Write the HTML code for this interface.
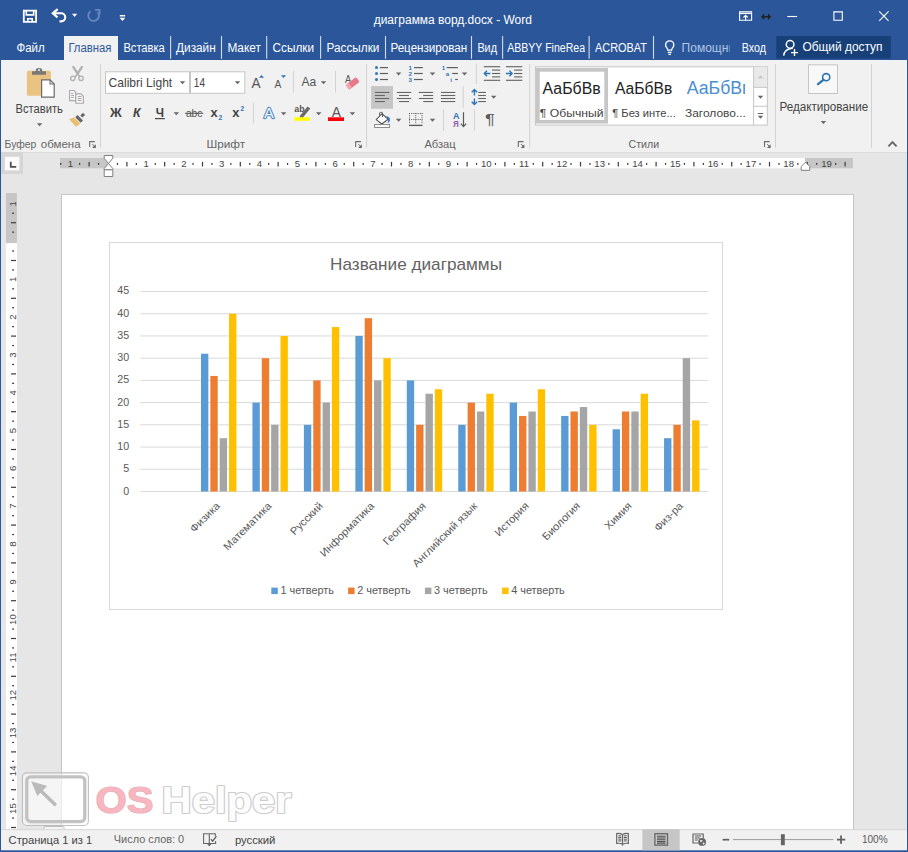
<!DOCTYPE html>
<html lang="ru"><head><meta charset="utf-8"><title>диаграмма ворд.docx - Word</title>
<style>
html,body{margin:0;padding:0}
body{width:908px;height:852px;overflow:hidden;background:#2b579a;position:relative;font-family:"Liberation Sans",sans-serif}
header,nav,section,main,footer,div.r{position:absolute;overflow:hidden;display:block}
svg{display:block;position:absolute;left:0;top:0}
svg text{font-family:"Liberation Sans",sans-serif;white-space:pre}
</style></head><body>
<header class="titlebar" style="left:0px;top:0px;width:908px;height:36px;background:#2b579a"><svg width="908" height="36" viewBox="0 0 908 36"><g fill="none" stroke="#fff" stroke-width="1.8"><path d="M23.800 10.600h12.300v11.200h-12.300z"/><path d="M26.300 10.600v4.300h7.400v-4.300" stroke-width="1.600"/><path d="M27.800 21.800v-3h4.400v3" stroke-width="1.600"/></g><g fill="none" stroke="#fff" stroke-width="2.100"><path d="M53.200 13.300h8a4.050 4.050 0 0 1 0 8.100h-1.700"/><path d="M57.700 9.200l-4.900 4.100 4.700 4" stroke-width="2.200"/></g><path d="M72 13.700h5.200l-2.600 3.200z" fill="#fff"/><g fill="none" stroke="#6786bc" stroke-width="1.900"><path d="M97.660 12.190A5.300 5.300 0 1 1 90.560 11.260"/><path d="M94.900 9.900h4.700v4.700" stroke-width="1.800"/></g><path d="M119.800 15h5.300v1.400h-5.300zM119.600 17.800h5.700l-2.850 3.200z" fill="#fff"/><text x="373.70" y="23.80" font-size="12" fill="#fff" textLength="158.12" lengthAdjust="spacingAndGlyphs">диаграмма ворд.docx - Word</text><g fill="none" stroke="#fff" stroke-width="1.1"><path d="M739.6 11.9h12v8.4h-12z"/><path d="M739.600 13.500h12"/><path d="M745.600 20.300v-4.800M743.500 17.500l2.100-2.100 2.100 2.100"/></g><path d="M761 16.7l3.3-3.3v2.5h3.6v-2.5l3.3 3.3-3.3 3.3v-2.5h-3.6v2.5z" fill="#222"/><path d="M787.3 16.5h9.8" stroke="#fff" stroke-width="1.1"/><path d="M833.9 11.9h8.4v8.4h-8.4z" stroke="#fff" stroke-width="1.1" fill="none"/><path d="M879.2 11.4l9.4 9.4M888.6 11.4l-9.4 9.4" stroke="#fff" stroke-width="1.1" fill="none"/></svg></header>
<nav class="tabs" style="left:0px;top:36px;width:908px;height:24px;background:#2b579a"><svg width="908" height="24" viewBox="0 36 908 24"><rect x="64" y="36" width="54" height="24" fill="#f1f1f1"/><text x="16.50" y="51.60" font-size="12" fill="#fff" textLength="28.20" lengthAdjust="spacingAndGlyphs">Файл</text><text x="68.40" y="51.60" font-size="12" fill="#2b579a" textLength="42.98" lengthAdjust="spacingAndGlyphs">Главная</text><text x="123.40" y="51.60" font-size="12" fill="#fff" textLength="41.40" lengthAdjust="spacingAndGlyphs">Вставка</text><text x="176.10" y="51.60" font-size="12" fill="#fff" textLength="39.63" lengthAdjust="spacingAndGlyphs">Дизайн</text><text x="227.40" y="51.60" font-size="12" fill="#fff" textLength="33.46" lengthAdjust="spacingAndGlyphs">Макет</text><text x="272.60" y="51.60" font-size="12" fill="#fff" textLength="41.44" lengthAdjust="spacingAndGlyphs">Ссылки</text><text x="326.50" y="51.60" font-size="12" fill="#fff" textLength="52.86" lengthAdjust="spacingAndGlyphs">Рассылки</text><text x="390.40" y="51.60" font-size="12" fill="#fff" textLength="76.88" lengthAdjust="spacingAndGlyphs">Рецензирован</text><text x="477.40" y="51.60" font-size="12" fill="#fff" textLength="19.61" lengthAdjust="spacingAndGlyphs">Вид</text><text x="595.00" y="51.60" font-size="12" fill="#fff" textLength="52.02" lengthAdjust="spacingAndGlyphs">ACROBAT</text><text x="741.70" y="51.60" font-size="12" fill="#fff" textLength="24.24" lengthAdjust="spacingAndGlyphs">Вход</text><clipPath id="cpa"><rect x="500" y="36" width="85" height="24"/></clipPath><g clip-path="url(#cpa)"><text x="507.20" y="51.60" font-size="12" fill="#fff" textLength="83.77" lengthAdjust="spacingAndGlyphs">ABBYY FineRead</text></g><clipPath id="cpb"><rect x="675" y="36" width="54.5" height="24"/></clipPath><g clip-path="url(#cpb)"><text x="681.60" y="51.60" font-size="12" fill="#b3c5e3" textLength="53.42" lengthAdjust="spacingAndGlyphs">Помощни</text></g><rect x="170.05" y="36" width="1.100" height="22.800" fill="#d3dcec"/><rect x="220.95" y="36" width="1.100" height="22.800" fill="#d3dcec"/><rect x="266.15" y="36" width="1.100" height="22.800" fill="#d3dcec"/><rect x="320.05" y="36" width="1.100" height="22.800" fill="#d3dcec"/><rect x="384.95" y="36" width="1.100" height="22.800" fill="#d3dcec"/><rect x="470.95" y="36" width="1.100" height="22.800" fill="#d3dcec"/><rect x="502.05" y="36" width="1.100" height="22.800" fill="#d3dcec"/><rect x="588.55" y="36" width="1.100" height="22.800" fill="#d3dcec"/><rect x="652.95" y="36" width="1.100" height="22.800" fill="#d3dcec"/><g transform="translate(0.800 0)" fill="none" stroke="#fff" stroke-width="1.300"><path d="M667 50.200c0-2-2.200-2.600-2.200-5.300a4.100 4.100 0 0 1 8.200 0c0 2.700-2.200 3.300-2.200 5.300z"/><path d="M667 52.300h3.800M667.600 54.300h2.600"/></g><rect x="776.300" y="36" width="114.500" height="22.600" fill="#174079"/><g fill="none" stroke="#fff" stroke-width="1.500"><circle cx="790.100" cy="44.400" r="3.800"/><path d="M783.700 55.700c0.400-3.700 2.700-6.300 6.600-6.900c1-0.100 1.800-0.300 2.500-0.800"/><path d="M794.500 49.100v7M791 52.600h7" stroke-width="1.400"/></g><text x="802.40" y="51.40" font-size="12" fill="#fff" textLength="80.13" lengthAdjust="spacingAndGlyphs">Общий доступ</text></svg></nav>
<section class="ribbon" style="left:1px;top:60px;width:905.5px;height:92px;background:#f1f1f1"><svg width="905.5" height="92" viewBox="1 60 905.5 92"><rect x="26.9" y="70.7" width="24" height="25.1" rx="1.6" fill="#eac282"/><path d="M32 71.3h3.800v-1.200a3.200 2.200 0 0 1 6.400 0v1.200h3.800v3.400h-14z" fill="#787878"/><rect x="38" y="69.300" width="2" height="1.500" fill="#f1f1f1"/><path d="M41.600 79.800h8.400l4.200 4.200v13.200h-12.600z" fill="#fff" stroke="#6a6a6a" stroke-width="1.200"/><path d="M50 79.800v4.200h4.200" fill="none" stroke="#6a6a6a" stroke-width="1.100"/><text x="15.50" y="112.60" font-size="12.3" fill="#444" textLength="47.33" lengthAdjust="spacingAndGlyphs">Вставить</text><path d="M36.85 123.20h5.5l-2.75 3z" fill="#666"/><path d="M71.700 66.600l2.300-0.600 3.600 5.600 3.600-5.600 2.300 0.600-4.700 7.300 1.900 2.700-1.300 0.800-1.800-2.400-1.800 2.400-1.300-0.800 1.900-2.700z" fill="#b0b0b0"/><g fill="none" stroke="#b0b0b0" stroke-width="1.300"><circle cx="72.800" cy="78.300" r="2.200"/><circle cx="81" cy="78.300" r="2.200"/></g><g fill="#f7f3f7" stroke="#ababab" stroke-width="1.100"><path d="M69.600 90.500h4.300l1.800 1.800v8.300h-6.100z"/><path d="M75.800 93.900h5.200l2.400 2.400v7h-7.600z"/></g><g stroke="#ababab" stroke-width="1" fill="none"><path d="M71.200 93.500h2.200M71.200 95.500h2.800M71.200 97.500h2.800M77.800 96.500h3.800M77.800 98.500h3.800M77.800 100.500h3.800"/></g><path d="M69.100 119.300l4.800-1.900 6.400 6-4.200 3.400z" fill="#eabd6e"/><rect x="-3.900" y="-1.650" width="7.800" height="3.300" transform="translate(79.100 118.900) rotate(45)" fill="#666"/><rect x="-1.500" y="-1.900" width="3" height="3.800" transform="translate(82.700 115.200) rotate(45)" fill="#666"/><text x="4.60" y="148.00" font-size="11.3" fill="#666" textLength="31.76" lengthAdjust="spacingAndGlyphs">Буфер</text><text x="40.80" y="148.00" font-size="11.3" fill="#666" textLength="39.79" lengthAdjust="spacingAndGlyphs">обмена</text><path d="M89.70 147.00V141.60H94.90" fill="none" stroke="#6e6e6e" stroke-width="1.100"/><path d="M95.80 144.30V147.90H92.10z" fill="#666"/><path d="M92.40 144.10l2.200 2.200" stroke="#666" stroke-width="1" fill="none"/><rect x="99.90" y="64" width="1" height="83.70" fill="#d2d2d2"/><rect x="105.500" y="71.800" width="139.300" height="21.500" fill="#fff" stroke="#c6c6c6" stroke-width="1"/><path d="M190 71.800v21.500" stroke="#c0c0c0" stroke-width="1.800"/><text x="108.60" y="86.80" font-size="13" fill="#444" textLength="63.64" lengthAdjust="spacingAndGlyphs">Calibri Light</text><text x="193.80" y="86.80" font-size="13" fill="#444" textLength="11.17" lengthAdjust="spacingAndGlyphs">14</text><path d="M179.75 81.20h5.5l-2.75 3z" fill="#666"/><path d="M234.75 81.20h5.5l-2.75 3z" fill="#666"/><text x="110.11" y="116.50" font-size="12" fill="#444" textLength="11.72" lengthAdjust="spacingAndGlyphs" font-weight="bold">Ж</text><text x="133.00" y="116.50" font-size="12" fill="#444" textLength="7.56" lengthAdjust="spacingAndGlyphs" font-weight="bold" font-style="italic">К</text><text x="155.80" y="116.50" font-size="12" fill="#444" textLength="8.23" lengthAdjust="spacingAndGlyphs" font-weight="bold">Ч</text><path d="M155.00 118.60H164.80" stroke="#444" stroke-width="1.2" fill="none"/><path d="M173.55 112.20h5.5l-2.75 3z" fill="#666"/><text x="185.90" y="116.50" font-size="11" fill="#555" textLength="16.53" lengthAdjust="spacingAndGlyphs">abc</text><path d="M185.00 113.30H203.20" stroke="#555" stroke-width="1" fill="none"/><text x="210.40" y="116.50" font-size="12" fill="#444" textLength="7.17" lengthAdjust="spacingAndGlyphs" font-weight="bold">x</text><text x="218.60" y="119.80" font-size="6.5" fill="#2e75b6" textLength="3.72" lengthAdjust="spacingAndGlyphs" font-weight="bold">2</text><text x="232.20" y="116.50" font-size="12" fill="#444" textLength="7.17" lengthAdjust="spacingAndGlyphs" font-weight="bold">x</text><text x="240.60" y="111.30" font-size="6.5" fill="#2e75b6" textLength="3.62" lengthAdjust="spacingAndGlyphs" font-weight="bold">2</text><text x="251.60" y="88.00" font-size="14.4" fill="#555" textLength="9.10" lengthAdjust="spacingAndGlyphs">A</text><path d="M259 77.700h5l-2.500-2.700z" fill="#2e75b6"/><text x="274.40" y="88.00" font-size="11" fill="#555" textLength="6.84" lengthAdjust="spacingAndGlyphs">A</text><path d="M281 75.300h5l-2.500 2.700z" fill="#2e75b6"/><rect x="292.90" y="71" width="1" height="21.50" fill="#d2d2d2"/><text x="301.50" y="86.00" font-size="12.3" fill="#555" textLength="14.75" lengthAdjust="spacingAndGlyphs">Aa</text><path d="M320.75 81.20h5.5l-2.75 3z" fill="#666"/><rect x="335.00" y="71" width="1" height="21.50" fill="#d2d2d2"/><text x="345.00" y="82.60" font-size="10.5" fill="#555" textLength="6.20" lengthAdjust="spacingAndGlyphs">A</text><g transform="rotate(-37 352.600 83.400)"><rect x="346" y="80.400" width="13.200" height="6" rx="1.400" fill="#e8798b"/><rect x="346" y="80.400" width="3.600" height="6" rx="1.300" fill="#f2a9b4"/></g><rect x="253.00" y="102.5" width="1" height="21.00" fill="#d2d2d2"/><text x="264" y="117.600" font-size="14.600" fill="#fff" stroke="#8db4e3" stroke-width="3" stroke-opacity="0.400" stroke-linejoin="round">A</text><text x="264" y="117.600" font-size="14.600" fill="#fff" stroke="#2e75b6" stroke-width="1.700" paint-order="stroke" stroke-linejoin="round">A</text><path d="M280.85 112.20h5.5l-2.75 3z" fill="#666"/><text x="294.30" y="112.30" font-size="9.6" fill="#555" textLength="10.30" lengthAdjust="spacingAndGlyphs" font-weight="bold">ab</text><path d="M299.900 115.800l7.700-9.400 2.700 2.200-7.700 9.400z" fill="#6a6a6a"/><path d="M299.300 117.300l1-1.300 1.800 1.500-1.400 0.600z" fill="#666"/><rect x="294.200" y="117.300" width="15.800" height="3.500" fill="#ffff00"/><path d="M315.95 112.20h5.5l-2.75 3z" fill="#666"/><text x="331.80" y="117.00" font-size="13.8" fill="#555" textLength="9.20" lengthAdjust="spacingAndGlyphs">A</text><rect x="328" y="117.300" width="16" height="3.700" fill="#fb0007"/><path d="M349.65 112.20h5.5l-2.75 3z" fill="#666"/><text x="206.50" y="147.80" font-size="11.3" fill="#666" textLength="38.58" lengthAdjust="spacingAndGlyphs">Шрифт</text><path d="M355.70 147.00V141.60H360.90" fill="none" stroke="#6e6e6e" stroke-width="1.100"/><path d="M361.80 144.30V147.90H358.10z" fill="#666"/><path d="M358.40 144.10l2.200 2.200" stroke="#666" stroke-width="1" fill="none"/><rect x="366.10" y="64" width="1" height="83.70" fill="#d2d2d2"/><circle cx="376.5" cy="67.6" r="1.500" fill="#2e75b6"/><path d="M379.90 67.60H388.00" stroke="#5e5e5e" stroke-width="1.2" fill="none"/><circle cx="376.5" cy="73.5" r="1.500" fill="#2e75b6"/><path d="M379.90 73.50H388.00" stroke="#5e5e5e" stroke-width="1.2" fill="none"/><circle cx="376.5" cy="79.5" r="1.500" fill="#2e75b6"/><path d="M379.90 79.50H388.00" stroke="#5e5e5e" stroke-width="1.2" fill="none"/><path d="M395.85 72.50h5.5l-2.75 3z" fill="#666"/><text x="408.60" y="69.90" font-size="6.200" font-weight="bold" fill="#2e75b6">1</text><path d="M414.00 67.60H422.80" stroke="#5e5e5e" stroke-width="1.2" fill="none"/><text x="408.60" y="75.80" font-size="6.200" font-weight="bold" fill="#2e75b6">2</text><path d="M414.00 73.50H422.80" stroke="#5e5e5e" stroke-width="1.2" fill="none"/><text x="408.60" y="81.80" font-size="6.200" font-weight="bold" fill="#2e75b6">3</text><path d="M414.00 79.50H422.80" stroke="#5e5e5e" stroke-width="1.2" fill="none"/><path d="M429.75 72.50h5.5l-2.75 3z" fill="#666"/><text x="441.70" y="69.90" font-size="6.200" font-weight="bold" fill="#2e75b6">1</text><path d="M446.70 67.60H457.90" stroke="#5e5e5e" stroke-width="1.2" fill="none"/><text x="445.70" y="75.80" font-size="6.200" font-weight="bold" fill="#2e75b6">a</text><path d="M452.20 73.50H457.90" stroke="#5e5e5e" stroke-width="1.2" fill="none"/><text x="450.20" y="81.80" font-size="6.200" font-weight="bold" fill="#2e75b6">i</text><path d="M455.20 79.50H457.90" stroke="#5e5e5e" stroke-width="1.2" fill="none"/><path d="M461.75 72.50h5.5l-2.75 3z" fill="#666"/><rect x="475.80" y="63.5" width="1" height="20.50" fill="#d2d2d2"/><path d="M483.80 66.70H500.20" stroke="#606060" stroke-width="1.1" fill="none"/><path d="M483.80 80.30H500.20" stroke="#606060" stroke-width="1.1" fill="none"/><path d="M492.00 70.10H500.20" stroke="#606060" stroke-width="1.1" fill="none"/><path d="M492.00 73.50H500.20" stroke="#606060" stroke-width="1.1" fill="none"/><path d="M492.00 76.90H500.20" stroke="#606060" stroke-width="1.1" fill="none"/><path d="M484.3 73.500h6M487.0 70.800l-2.700 2.700 2.700 2.700" fill="none" stroke="#2e75b6" stroke-width="1.400"/><path d="M505.90 66.70H522.30" stroke="#606060" stroke-width="1.1" fill="none"/><path d="M505.90 80.30H522.30" stroke="#606060" stroke-width="1.1" fill="none"/><path d="M514.10 70.10H522.30" stroke="#606060" stroke-width="1.1" fill="none"/><path d="M514.10 73.50H522.30" stroke="#606060" stroke-width="1.1" fill="none"/><path d="M514.10 76.90H522.30" stroke="#606060" stroke-width="1.1" fill="none"/><path d="M505.9 73.500h6M509.4 70.800l2.700 2.700-2.700 2.700" fill="none" stroke="#2e75b6" stroke-width="1.400"/><rect x="371.100" y="86" width="21.900" height="22.800" fill="#c6c6c6"/><path d="M374.90 92.45H389.30" stroke="#666" stroke-width="1.1" fill="none"/><path d="M374.90 95.50H384.90" stroke="#666" stroke-width="1.1" fill="none"/><path d="M374.90 98.50H389.30" stroke="#666" stroke-width="1.1" fill="none"/><path d="M374.90 101.55H384.90" stroke="#666" stroke-width="1.1" fill="none"/><path d="M396.80 92.45H411.20" stroke="#666" stroke-width="1.1" fill="none"/><path d="M399.00 95.50H409.00" stroke="#666" stroke-width="1.1" fill="none"/><path d="M396.80 98.50H411.20" stroke="#666" stroke-width="1.1" fill="none"/><path d="M399.00 101.55H409.00" stroke="#666" stroke-width="1.1" fill="none"/><path d="M418.80 92.45H433.20" stroke="#666" stroke-width="1.1" fill="none"/><path d="M423.20 95.50H433.20" stroke="#666" stroke-width="1.1" fill="none"/><path d="M418.80 98.50H433.20" stroke="#666" stroke-width="1.1" fill="none"/><path d="M423.20 101.55H433.20" stroke="#666" stroke-width="1.1" fill="none"/><path d="M440.90 92.45H455.30" stroke="#666" stroke-width="1.1" fill="none"/><path d="M440.90 95.50H455.30" stroke="#666" stroke-width="1.1" fill="none"/><path d="M440.90 98.50H455.30" stroke="#666" stroke-width="1.1" fill="none"/><path d="M440.90 101.55H455.30" stroke="#666" stroke-width="1.1" fill="none"/><rect x="462.70" y="86" width="1" height="21.90" fill="#d2d2d2"/><path d="M474.400 89.600v6M474.400 98.400v6M471.700 92.200l2.700-2.800 2.700 2.800M471.700 101.800l2.700 2.800 2.700-2.800" fill="none" stroke="#2e75b6" stroke-width="1.400"/><path d="M478.20 92.45H485.90" stroke="#666" stroke-width="1.1" fill="none"/><path d="M478.20 95.50H485.90" stroke="#666" stroke-width="1.1" fill="none"/><path d="M478.20 98.50H485.90" stroke="#666" stroke-width="1.1" fill="none"/><path d="M478.20 101.55H485.90" stroke="#666" stroke-width="1.1" fill="none"/><path d="M490.95 95.80h5.5l-2.75 3z" fill="#666"/><path d="M376.200 119.600l5.900-6 6 5.700-6.300 4.700z" fill="#fff" stroke="#555" stroke-width="1.100" stroke-linejoin="round"/><path d="M379.600 115.600v-2.400a0.800 0.800 0 0 1 0.800-0.800h1.300a0.800 0.800 0 0 1 0.800 0.800v3.800" fill="none" stroke="#555" stroke-width="1"/><path d="M386 116c2.600 0.400 4.200 1.800 4 4.200c-0.300 1.300-1.200 2.400-2.400 3.100c0.500-1.500 0.600-2.800 0.400-4.100z" fill="#3a75c4"/><rect x="374.600" y="124.500" width="15" height="3" fill="#fff" stroke="#808080" stroke-width="0.900"/><path d="M395.85 118.80h5.5l-2.75 3z" fill="#666"/><g stroke="#555" stroke-width="1" stroke-dasharray="1 1.170" fill="none"><path d="M409 113.500h13.500M409 119.500h13.500M409.500 113v11M415.700 113v11M422 113v11"/></g><path d="M409.00 125.40H422.50" stroke="#555" stroke-width="1.3" fill="none"/><path d="M429.75 118.80h5.5l-2.75 3z" fill="#666"/><rect x="443.10" y="109.2" width="1" height="21.80" fill="#d2d2d2"/><text x="452.90" y="118.60" font-size="9" fill="#2e75b6" textLength="6.50" lengthAdjust="spacingAndGlyphs" font-weight="bold">A</text><text x="452.90" y="126.80" font-size="8.7" fill="#8e5bb3" textLength="5.76" lengthAdjust="spacingAndGlyphs" font-weight="bold">Я</text><path d="M463.500 112.200v14M460.800 123.700l2.700 2.900 2.700-2.900" fill="none" stroke="#5a5a5a" stroke-width="1.200"/><rect x="474.00" y="109.2" width="1" height="21.80" fill="#d2d2d2"/><text x="484.90" y="124.20" font-size="15" fill="#5a5a5a" textLength="9.85" lengthAdjust="spacingAndGlyphs">¶</text><text x="424.40" y="147.80" font-size="11.3" fill="#666" textLength="31.30" lengthAdjust="spacingAndGlyphs">Абзац</text><path d="M518.30 147.00V141.60H523.50" fill="none" stroke="#6e6e6e" stroke-width="1.100"/><path d="M524.40 144.30V147.90H520.70z" fill="#666"/><path d="M521.00 144.10l2.200 2.200" stroke="#666" stroke-width="1" fill="none"/><rect x="529.20" y="64" width="1" height="83.70" fill="#d2d2d2"/><rect x="535.400" y="66.800" width="231.900" height="58.300" fill="#fff" stroke="#c6c6c6" stroke-width="1"/><rect x="537.850" y="69.850" width="68.300" height="51.900" fill="none" stroke="#c6c6c6" stroke-width="3.700"/><text x="542.60" y="93.80" font-size="16" fill="#222" textLength="58.09" lengthAdjust="spacingAndGlyphs">АаБбВв</text><text x="615.00" y="93.80" font-size="16" fill="#222" textLength="57.29" lengthAdjust="spacingAndGlyphs">АаБбВв</text><clipPath id="cps"><rect x="680" y="67" width="65" height="58"/></clipPath><g clip-path="url(#cps)"><text x="686.70" y="94.40" font-size="18" fill="#4a8fd0" textLength="64.81" lengthAdjust="spacingAndGlyphs">АаБбВв</text></g><text x="539.80" y="117.30" font-size="11.8" fill="#444" textLength="63.77" lengthAdjust="spacingAndGlyphs">¶ Обычный</text><text x="612.20" y="117.30" font-size="11.8" fill="#444" textLength="63.63" lengthAdjust="spacingAndGlyphs">¶ Без инте...</text><text x="685.00" y="117.30" font-size="11.8" fill="#444" textLength="60.95" lengthAdjust="spacingAndGlyphs">Заголово...</text><rect x="753.600" y="67.300" width="13.200" height="20" fill="#e9e9e9"/><path d="M753.600 66.800v58.300M753.600 87.400h13.700M753.600 106.300h13.700" stroke="#c6c6c6" stroke-width="1" fill="none"/><path d="M757.800 78.300h5.400l-2.700-2.900z" fill="#c3c3c3"/><path d="M757.75 95.80h5.5l-2.75 3z" fill="#666"/><path d="M757.80 113.50H763.20" stroke="#666" stroke-width="1" fill="none"/><path d="M757.75 115.70h5.5l-2.75 3z" fill="#666"/><text x="628.50" y="147.80" font-size="11.3" fill="#666" textLength="30.66" lengthAdjust="spacingAndGlyphs">Стили</text><path d="M764.50 147.00V141.60H769.70" fill="none" stroke="#6e6e6e" stroke-width="1.100"/><path d="M770.60 144.30V147.90H766.90z" fill="#666"/><path d="M767.20 144.10l2.200 2.200" stroke="#666" stroke-width="1" fill="none"/><rect x="774.90" y="64" width="1" height="83.70" fill="#d2d2d2"/><rect x="808.500" y="64.800" width="29" height="28.700" fill="#f8f8f8" stroke="#c6c6c6" stroke-width="1"/><circle cx="826.200" cy="77.200" r="3.600" fill="none" stroke="#2e75b6" stroke-width="1.600"/><path d="M823.400 79.800l-5.400 4.300" stroke="#2e75b6" stroke-width="2.300" stroke-linecap="round"/><text x="779.40" y="110.60" font-size="12" fill="#444" textLength="88.81" lengthAdjust="spacingAndGlyphs">Редактирование</text><path d="M820.65 120.90h5.5l-2.75 3z" fill="#666"/><rect x="871.00" y="64" width="1" height="83.70" fill="#d2d2d2"/><path d="M888.400 146.300l4.100-4.100 4.100 4.100" fill="none" stroke="#666" stroke-width="1.900"/></svg></section>
<main class="docarea" style="left:1px;top:152px;width:905.5px;height:678px;background:#e6e6e6"><svg width="905.5" height="678" viewBox="1 152 905.5 678"><rect x="1" y="152.100" width="906" height="1" fill="#dbdbdb"/><rect x="1" y="152" width="22" height="22" fill="#d6d6d6"/><rect x="4.900" y="156.800" width="14.500" height="13.600" fill="#fbfbfb"/><path d="M10.800 161.800v5.100h5.400" fill="none" stroke="#505050" stroke-width="1.800"/><rect x="60" y="158" width="48" height="10.300" fill="#c6c6c6"/><rect x="108" y="158" width="697" height="10.300" fill="#fff"/><rect x="805" y="158" width="48" height="10.300" fill="#c6c6c6"/><text x="67.85" y="166.700" font-size="9.600" fill="#444">1</text><rect x="79.05" y="162.900" width="1.200" height="2" fill="#3a3a3a"/><rect x="88.50" y="161.900" width="1.200" height="4.600" fill="#3c3c3c"/><rect x="97.95" y="162.900" width="1.200" height="2" fill="#3a3a3a"/><rect x="116.85" y="162.900" width="1.200" height="2" fill="#3a3a3a"/><rect x="126.30" y="161.900" width="1.200" height="4.600" fill="#3c3c3c"/><rect x="135.75" y="162.900" width="1.200" height="2" fill="#3a3a3a"/><text x="143.45" y="166.700" font-size="9.600" fill="#444">1</text><rect x="154.65" y="162.900" width="1.200" height="2" fill="#3a3a3a"/><rect x="164.10" y="161.900" width="1.200" height="4.600" fill="#3c3c3c"/><rect x="173.55" y="162.900" width="1.200" height="2" fill="#3a3a3a"/><text x="181.25" y="166.700" font-size="9.600" fill="#444">2</text><rect x="192.45" y="162.900" width="1.200" height="2" fill="#3a3a3a"/><rect x="201.90" y="161.900" width="1.200" height="4.600" fill="#3c3c3c"/><rect x="211.35" y="162.900" width="1.200" height="2" fill="#3a3a3a"/><text x="219.05" y="166.700" font-size="9.600" fill="#444">3</text><rect x="230.25" y="162.900" width="1.200" height="2" fill="#3a3a3a"/><rect x="239.70" y="161.900" width="1.200" height="4.600" fill="#3c3c3c"/><rect x="249.15" y="162.900" width="1.200" height="2" fill="#3a3a3a"/><text x="256.85" y="166.700" font-size="9.600" fill="#444">4</text><rect x="268.05" y="162.900" width="1.200" height="2" fill="#3a3a3a"/><rect x="277.50" y="161.900" width="1.200" height="4.600" fill="#3c3c3c"/><rect x="286.95" y="162.900" width="1.200" height="2" fill="#3a3a3a"/><text x="294.65" y="166.700" font-size="9.600" fill="#444">5</text><rect x="305.85" y="162.900" width="1.200" height="2" fill="#3a3a3a"/><rect x="315.30" y="161.900" width="1.200" height="4.600" fill="#3c3c3c"/><rect x="324.75" y="162.900" width="1.200" height="2" fill="#3a3a3a"/><text x="332.45" y="166.700" font-size="9.600" fill="#444">6</text><rect x="343.65" y="162.900" width="1.200" height="2" fill="#3a3a3a"/><rect x="353.10" y="161.900" width="1.200" height="4.600" fill="#3c3c3c"/><rect x="362.55" y="162.900" width="1.200" height="2" fill="#3a3a3a"/><text x="370.25" y="166.700" font-size="9.600" fill="#444">7</text><rect x="381.45" y="162.900" width="1.200" height="2" fill="#3a3a3a"/><rect x="390.90" y="161.900" width="1.200" height="4.600" fill="#3c3c3c"/><rect x="400.35" y="162.900" width="1.200" height="2" fill="#3a3a3a"/><text x="408.05" y="166.700" font-size="9.600" fill="#444">8</text><rect x="419.25" y="162.900" width="1.200" height="2" fill="#3a3a3a"/><rect x="428.70" y="161.900" width="1.200" height="4.600" fill="#3c3c3c"/><rect x="438.15" y="162.900" width="1.200" height="2" fill="#3a3a3a"/><text x="445.85" y="166.700" font-size="9.600" fill="#444">9</text><rect x="457.05" y="162.900" width="1.200" height="2" fill="#3a3a3a"/><rect x="466.50" y="161.900" width="1.200" height="4.600" fill="#3c3c3c"/><rect x="475.95" y="162.900" width="1.200" height="2" fill="#3a3a3a"/><text x="480.95" y="166.700" font-size="9.600" fill="#444">10</text><rect x="494.85" y="162.900" width="1.200" height="2" fill="#3a3a3a"/><rect x="504.30" y="161.900" width="1.200" height="4.600" fill="#3c3c3c"/><rect x="513.75" y="162.900" width="1.200" height="2" fill="#3a3a3a"/><text x="519.10" y="166.700" font-size="9.600" fill="#444">11</text><rect x="532.65" y="162.900" width="1.200" height="2" fill="#3a3a3a"/><rect x="542.10" y="161.900" width="1.200" height="4.600" fill="#3c3c3c"/><rect x="551.55" y="162.900" width="1.200" height="2" fill="#3a3a3a"/><text x="556.55" y="166.700" font-size="9.600" fill="#444">12</text><rect x="570.45" y="162.900" width="1.200" height="2" fill="#3a3a3a"/><rect x="579.90" y="161.900" width="1.200" height="4.600" fill="#3c3c3c"/><rect x="589.35" y="162.900" width="1.200" height="2" fill="#3a3a3a"/><text x="594.35" y="166.700" font-size="9.600" fill="#444">13</text><rect x="608.25" y="162.900" width="1.200" height="2" fill="#3a3a3a"/><rect x="617.70" y="161.900" width="1.200" height="4.600" fill="#3c3c3c"/><rect x="627.15" y="162.900" width="1.200" height="2" fill="#3a3a3a"/><text x="632.15" y="166.700" font-size="9.600" fill="#444">14</text><rect x="646.05" y="162.900" width="1.200" height="2" fill="#3a3a3a"/><rect x="655.50" y="161.900" width="1.200" height="4.600" fill="#3c3c3c"/><rect x="664.95" y="162.900" width="1.200" height="2" fill="#3a3a3a"/><text x="669.95" y="166.700" font-size="9.600" fill="#444">15</text><rect x="683.85" y="162.900" width="1.200" height="2" fill="#3a3a3a"/><rect x="693.30" y="161.900" width="1.200" height="4.600" fill="#3c3c3c"/><rect x="702.75" y="162.900" width="1.200" height="2" fill="#3a3a3a"/><text x="707.75" y="166.700" font-size="9.600" fill="#444">16</text><rect x="721.65" y="162.900" width="1.200" height="2" fill="#3a3a3a"/><rect x="731.10" y="161.900" width="1.200" height="4.600" fill="#3c3c3c"/><rect x="740.55" y="162.900" width="1.200" height="2" fill="#3a3a3a"/><text x="745.55" y="166.700" font-size="9.600" fill="#444">17</text><rect x="759.45" y="162.900" width="1.200" height="2" fill="#3a3a3a"/><rect x="768.90" y="161.900" width="1.200" height="4.600" fill="#3c3c3c"/><rect x="778.35" y="162.900" width="1.200" height="2" fill="#3a3a3a"/><text x="783.35" y="166.700" font-size="9.600" fill="#444">18</text><rect x="797.25" y="162.900" width="1.200" height="2" fill="#3a3a3a"/><rect x="806.70" y="161.900" width="1.200" height="4.600" fill="#3c3c3c"/><rect x="816.15" y="162.900" width="1.200" height="2" fill="#3a3a3a"/><text x="821.15" y="166.700" font-size="9.600" fill="#444">19</text><rect x="835.05" y="162.900" width="1.200" height="2" fill="#3a3a3a"/><rect x="844.50" y="161.900" width="1.200" height="4.600" fill="#3c3c3c"/><rect x="60.15" y="162.900" width="1.200" height="2" fill="#3a3a3a"/><g fill="#fff" stroke="#808080" stroke-width="1"><path d="M104.200 155.500h8.600v2.800l-4.300 5.200-4.300-5.200z"/><path d="M104.200 169.800v-1.300l4.300-5 4.300 5v1.300z"/><path d="M104.200 169.800h8.600v6.700h-8.600z"/><path d="M801.200 170.300v-3.800l4.300-4.300 4.300 4.300v3.800z"/></g><rect x="6" y="193" width="10.900" height="50.200" fill="#c6c6c6"/><rect x="6" y="243.200" width="10.900" height="590" fill="#fff"/><text transform="translate(16.400 206.45) rotate(-90)" font-size="9.600" fill="#444">1</text><rect x="12.100" y="212.65" width="2" height="1.200" fill="#3a3a3a"/><rect x="11" y="222.10" width="5" height="1.200" fill="#3c3c3c"/><rect x="12.100" y="231.55" width="2" height="1.200" fill="#3a3a3a"/><rect x="12.100" y="250.45" width="2" height="1.200" fill="#3a3a3a"/><rect x="11" y="259.90" width="5" height="1.200" fill="#3c3c3c"/><rect x="12.100" y="269.35" width="2" height="1.200" fill="#3a3a3a"/><text transform="translate(16.400 282.05) rotate(-90)" font-size="9.600" fill="#444">1</text><rect x="12.100" y="288.25" width="2" height="1.200" fill="#3a3a3a"/><rect x="11" y="297.70" width="5" height="1.200" fill="#3c3c3c"/><rect x="12.100" y="307.15" width="2" height="1.200" fill="#3a3a3a"/><text transform="translate(16.400 319.85) rotate(-90)" font-size="9.600" fill="#444">2</text><rect x="12.100" y="326.05" width="2" height="1.200" fill="#3a3a3a"/><rect x="11" y="335.50" width="5" height="1.200" fill="#3c3c3c"/><rect x="12.100" y="344.95" width="2" height="1.200" fill="#3a3a3a"/><text transform="translate(16.400 357.65) rotate(-90)" font-size="9.600" fill="#444">3</text><rect x="12.100" y="363.85" width="2" height="1.200" fill="#3a3a3a"/><rect x="11" y="373.30" width="5" height="1.200" fill="#3c3c3c"/><rect x="12.100" y="382.75" width="2" height="1.200" fill="#3a3a3a"/><text transform="translate(16.400 395.45) rotate(-90)" font-size="9.600" fill="#444">4</text><rect x="12.100" y="401.65" width="2" height="1.200" fill="#3a3a3a"/><rect x="11" y="411.10" width="5" height="1.200" fill="#3c3c3c"/><rect x="12.100" y="420.55" width="2" height="1.200" fill="#3a3a3a"/><text transform="translate(16.400 433.25) rotate(-90)" font-size="9.600" fill="#444">5</text><rect x="12.100" y="439.45" width="2" height="1.200" fill="#3a3a3a"/><rect x="11" y="448.90" width="5" height="1.200" fill="#3c3c3c"/><rect x="12.100" y="458.35" width="2" height="1.200" fill="#3a3a3a"/><text transform="translate(16.400 471.05) rotate(-90)" font-size="9.600" fill="#444">6</text><rect x="12.100" y="477.25" width="2" height="1.200" fill="#3a3a3a"/><rect x="11" y="486.70" width="5" height="1.200" fill="#3c3c3c"/><rect x="12.100" y="496.15" width="2" height="1.200" fill="#3a3a3a"/><text transform="translate(16.400 508.85) rotate(-90)" font-size="9.600" fill="#444">7</text><rect x="12.100" y="515.05" width="2" height="1.200" fill="#3a3a3a"/><rect x="11" y="524.50" width="5" height="1.200" fill="#3c3c3c"/><rect x="12.100" y="533.95" width="2" height="1.200" fill="#3a3a3a"/><text transform="translate(16.400 546.65) rotate(-90)" font-size="9.600" fill="#444">8</text><rect x="12.100" y="552.85" width="2" height="1.200" fill="#3a3a3a"/><rect x="11" y="562.30" width="5" height="1.200" fill="#3c3c3c"/><rect x="12.100" y="571.75" width="2" height="1.200" fill="#3a3a3a"/><text transform="translate(16.400 584.45) rotate(-90)" font-size="9.600" fill="#444">9</text><rect x="12.100" y="590.65" width="2" height="1.200" fill="#3a3a3a"/><rect x="11" y="600.10" width="5" height="1.200" fill="#3c3c3c"/><rect x="12.100" y="609.55" width="2" height="1.200" fill="#3a3a3a"/><text transform="translate(16.400 624.95) rotate(-90)" font-size="9.600" fill="#444">10</text><rect x="12.100" y="628.45" width="2" height="1.200" fill="#3a3a3a"/><rect x="11" y="637.90" width="5" height="1.200" fill="#3c3c3c"/><rect x="12.100" y="647.35" width="2" height="1.200" fill="#3a3a3a"/><text transform="translate(16.400 662.40) rotate(-90)" font-size="9.600" fill="#444">11</text><rect x="12.100" y="666.25" width="2" height="1.200" fill="#3a3a3a"/><rect x="11" y="675.70" width="5" height="1.200" fill="#3c3c3c"/><rect x="12.100" y="685.15" width="2" height="1.200" fill="#3a3a3a"/><text transform="translate(16.400 700.55) rotate(-90)" font-size="9.600" fill="#444">12</text><rect x="12.100" y="704.05" width="2" height="1.200" fill="#3a3a3a"/><rect x="11" y="713.50" width="5" height="1.200" fill="#3c3c3c"/><rect x="12.100" y="722.95" width="2" height="1.200" fill="#3a3a3a"/><text transform="translate(16.400 738.35) rotate(-90)" font-size="9.600" fill="#444">13</text><rect x="12.100" y="741.85" width="2" height="1.200" fill="#3a3a3a"/><rect x="11" y="751.30" width="5" height="1.200" fill="#3c3c3c"/><rect x="12.100" y="760.75" width="2" height="1.200" fill="#3a3a3a"/><text transform="translate(16.400 776.15) rotate(-90)" font-size="9.600" fill="#444">14</text><rect x="12.100" y="779.65" width="2" height="1.200" fill="#3a3a3a"/><rect x="11" y="789.10" width="5" height="1.200" fill="#3c3c3c"/><rect x="12.100" y="798.55" width="2" height="1.200" fill="#3a3a3a"/><text transform="translate(16.400 813.95) rotate(-90)" font-size="9.600" fill="#444">15</text><rect x="12.100" y="817.45" width="2" height="1.200" fill="#3a3a3a"/><rect x="11" y="826.90" width="5" height="1.200" fill="#3c3c3c"/><rect x="61.500" y="194.500" width="792" height="640" fill="#fff" stroke="#c6c6c6" stroke-width="1"/><rect x="109.500" y="242.500" width="613" height="367" fill="#fff" stroke="#d9d9d9" stroke-width="1"/><text x="330.00" y="270.20" font-size="17" fill="#636363" textLength="171.97" lengthAdjust="spacingAndGlyphs">Название диаграммы</text><rect x="140.300" y="491.00" width="567.600" height="1" fill="#d9d9d9"/><text x="123.20" y="494.50" font-size="10.700" fill="#595959">0</text><rect x="140.300" y="468.78" width="567.600" height="1" fill="#d9d9d9"/><text x="123.20" y="472.28" font-size="10.700" fill="#595959">5</text><rect x="140.300" y="446.56" width="567.600" height="1" fill="#d9d9d9"/><text x="117.30" y="450.06" font-size="10.700" fill="#595959">10</text><rect x="140.300" y="424.33" width="567.600" height="1" fill="#d9d9d9"/><text x="117.30" y="427.83" font-size="10.700" fill="#595959">15</text><rect x="140.300" y="402.11" width="567.600" height="1" fill="#d9d9d9"/><text x="117.30" y="405.61" font-size="10.700" fill="#595959">20</text><rect x="140.300" y="379.89" width="567.600" height="1" fill="#d9d9d9"/><text x="117.30" y="383.39" font-size="10.700" fill="#595959">25</text><rect x="140.300" y="357.67" width="567.600" height="1" fill="#d9d9d9"/><text x="117.30" y="361.17" font-size="10.700" fill="#595959">30</text><rect x="140.300" y="335.44" width="567.600" height="1" fill="#d9d9d9"/><text x="117.30" y="338.94" font-size="10.700" fill="#595959">35</text><rect x="140.300" y="313.22" width="567.600" height="1" fill="#d9d9d9"/><text x="117.30" y="316.72" font-size="10.700" fill="#595959">40</text><rect x="140.300" y="291.00" width="567.600" height="1" fill="#d9d9d9"/><text x="117.30" y="293.80" font-size="10.700" fill="#595959">45</text><rect x="201.00" y="353.72" width="7.36" height="137.78" fill="#5b9bd5"/><rect x="210.35" y="375.94" width="7.36" height="115.56" fill="#ed7d31"/><rect x="219.70" y="438.17" width="7.36" height="53.33" fill="#a5a5a5"/><rect x="229.05" y="313.72" width="7.36" height="177.78" fill="#ffc000"/><text transform="translate(220.70 506.60) rotate(-45)" x="-37.34" y="0" font-size="10.700" fill="#595959" textLength="37.30" lengthAdjust="spacingAndGlyphs">Физика</text><rect x="252.45" y="402.61" width="7.36" height="88.89" fill="#5b9bd5"/><rect x="261.80" y="358.17" width="7.36" height="133.33" fill="#ed7d31"/><rect x="271.15" y="424.83" width="7.36" height="66.67" fill="#a5a5a5"/><rect x="280.50" y="335.94" width="7.36" height="155.56" fill="#ffc000"/><text transform="translate(272.15 506.60) rotate(-45)" x="-62.71" y="0" font-size="10.700" fill="#595959" textLength="62.71" lengthAdjust="spacingAndGlyphs">Математика</text><rect x="303.90" y="424.83" width="7.36" height="66.67" fill="#5b9bd5"/><rect x="313.25" y="380.39" width="7.36" height="111.11" fill="#ed7d31"/><rect x="322.60" y="402.61" width="7.36" height="88.89" fill="#a5a5a5"/><rect x="331.95" y="327.06" width="7.36" height="164.44" fill="#ffc000"/><text transform="translate(323.60 506.60) rotate(-45)" x="-41.29" y="0" font-size="10.700" fill="#595959" textLength="41.29" lengthAdjust="spacingAndGlyphs">Русский</text><rect x="355.35" y="335.94" width="7.36" height="155.56" fill="#5b9bd5"/><rect x="364.70" y="318.17" width="7.36" height="173.33" fill="#ed7d31"/><rect x="374.05" y="380.39" width="7.36" height="111.11" fill="#a5a5a5"/><rect x="383.40" y="358.17" width="7.36" height="133.33" fill="#ffc000"/><text transform="translate(375.06 506.60) rotate(-45)" x="-71.97" y="0" font-size="10.700" fill="#595959" textLength="71.89" lengthAdjust="spacingAndGlyphs">Информатика</text><rect x="406.80" y="380.39" width="7.36" height="111.11" fill="#5b9bd5"/><rect x="416.15" y="424.83" width="7.36" height="66.67" fill="#ed7d31"/><rect x="425.50" y="393.72" width="7.36" height="97.78" fill="#a5a5a5"/><rect x="434.85" y="389.28" width="7.36" height="102.22" fill="#ffc000"/><text transform="translate(426.50 506.60) rotate(-45)" x="-55.54" y="0" font-size="10.700" fill="#595959" textLength="55.50" lengthAdjust="spacingAndGlyphs">География</text><rect x="458.25" y="424.83" width="7.36" height="66.67" fill="#5b9bd5"/><rect x="467.60" y="402.61" width="7.36" height="88.89" fill="#ed7d31"/><rect x="476.95" y="411.50" width="7.36" height="80.00" fill="#a5a5a5"/><rect x="486.30" y="393.72" width="7.36" height="97.78" fill="#ffc000"/><text transform="translate(477.95 506.60) rotate(-45)" x="-86.42" y="0" font-size="10.700" fill="#595959" textLength="86.26" lengthAdjust="spacingAndGlyphs">Английский язык</text><rect x="509.70" y="402.61" width="7.36" height="88.89" fill="#5b9bd5"/><rect x="519.05" y="415.94" width="7.36" height="75.56" fill="#ed7d31"/><rect x="528.40" y="411.50" width="7.36" height="80.00" fill="#a5a5a5"/><rect x="537.75" y="389.28" width="7.36" height="102.22" fill="#ffc000"/><text transform="translate(529.41 506.60) rotate(-45)" x="-43.16" y="0" font-size="10.700" fill="#595959" textLength="43.15" lengthAdjust="spacingAndGlyphs">История</text><rect x="561.15" y="415.94" width="7.36" height="75.56" fill="#5b9bd5"/><rect x="570.50" y="411.50" width="7.36" height="80.00" fill="#ed7d31"/><rect x="579.85" y="407.06" width="7.36" height="84.44" fill="#a5a5a5"/><rect x="589.20" y="424.83" width="7.36" height="66.67" fill="#ffc000"/><text transform="translate(580.86 506.60) rotate(-45)" x="-48.57" y="0" font-size="10.700" fill="#595959" textLength="48.57" lengthAdjust="spacingAndGlyphs">Биология</text><rect x="612.60" y="429.28" width="7.36" height="62.22" fill="#5b9bd5"/><rect x="621.95" y="411.50" width="7.36" height="80.00" fill="#ed7d31"/><rect x="631.30" y="411.50" width="7.36" height="80.00" fill="#a5a5a5"/><rect x="640.65" y="393.72" width="7.36" height="97.78" fill="#ffc000"/><text transform="translate(632.31 506.60) rotate(-45)" x="-33.49" y="0" font-size="10.700" fill="#595959" textLength="33.53" lengthAdjust="spacingAndGlyphs">Химия</text><rect x="664.05" y="438.17" width="7.36" height="53.33" fill="#5b9bd5"/><rect x="673.40" y="424.83" width="7.36" height="66.67" fill="#ed7d31"/><rect x="682.75" y="358.17" width="7.36" height="133.33" fill="#a5a5a5"/><rect x="692.10" y="420.39" width="7.36" height="71.11" fill="#ffc000"/><text transform="translate(683.75 506.60) rotate(-45)" x="-35.88" y="0" font-size="10.700" fill="#595959" textLength="35.86" lengthAdjust="spacingAndGlyphs">Физ-ра</text><rect x="271.30" y="587.600" width="6.500" height="6.500" fill="#5b9bd5"/><text x="280.40" y="593.70" font-size="10.7" fill="#595959" textLength="53.60" lengthAdjust="spacingAndGlyphs">1 четверть</text><rect x="348.10" y="587.600" width="6.500" height="6.500" fill="#ed7d31"/><text x="357.20" y="593.70" font-size="10.7" fill="#595959" textLength="53.60" lengthAdjust="spacingAndGlyphs">2 четверть</text><rect x="424.90" y="587.600" width="6.500" height="6.500" fill="#a5a5a5"/><text x="434.00" y="593.70" font-size="10.7" fill="#595959" textLength="53.60" lengthAdjust="spacingAndGlyphs">3 четверть</text><rect x="502.10" y="587.600" width="6.500" height="6.500" fill="#ffc000"/><text x="511.20" y="593.70" font-size="10.7" fill="#595959" textLength="53.60" lengthAdjust="spacingAndGlyphs">4 четверть</text><rect x="22.400" y="772.900" width="66" height="52.600" rx="4.500" fill="#fff" fill-opacity="0.450" stroke="#bcbcbc" stroke-opacity="0.950" stroke-width="1.100"/><rect x="26.800" y="776.800" width="58" height="44.800" rx="4" fill="#fff" fill-opacity="0.300" stroke="#bfbfbf" stroke-opacity="0.950" stroke-width="3.300"/><path d="M43.900 830.500v-2.500a1.500 1.500 0 0 1 1.500-1.500h17.200a1.500 1.500 0 0 1 1.500 1.500v2.500" fill="#fff" fill-opacity="0.600" stroke="#bdbdbd" stroke-width="1"/><g opacity="0.800"><path d="M31.200 781.200l16 4.900-9.900 10z" fill="#adadad"/><path d="M40 790l14.800 14.300" stroke="#adadad" stroke-width="3.600" stroke-linecap="round" fill="none"/></g><g font-weight="bold" font-size="36.200" paint-order="stroke" stroke-linejoin="round"><text x="95.500" y="812.800" textLength="58" lengthAdjust="spacingAndGlyphs" fill="#f9b6c0" stroke="#fff" stroke-opacity="0.800" stroke-width="4">OS</text><text x="95.500" y="812.800" textLength="58" lengthAdjust="spacingAndGlyphs" fill="#f9b6c0" stroke="#dcb4ba" stroke-width="1.200">OS</text><text x="161.500" y="812.800" textLength="130" lengthAdjust="spacingAndGlyphs" fill="#fdfdfd" stroke="#cdcdcd" stroke-width="2.200">Helper</text></g></svg></main>
<footer class="statusbar" style="left:1px;top:829px;width:905.5px;height:23px;background:transparent"><svg width="905.5" height="23" viewBox="1 829 905.5 23"><rect x="1" y="829.300" width="906" height="21" fill="#f1f1f1"/><rect x="1" y="829.300" width="906" height="0.800" fill="#d0d0d0"/><text x="8.60" y="844.00" font-size="10.3" fill="#444" textLength="83.59" lengthAdjust="spacingAndGlyphs">Страница 1 из 1</text><text x="113.80" y="843.30" font-size="10.5" fill="#666" textLength="70.40" lengthAdjust="spacingAndGlyphs">Число слов: 0</text><g fill="none" stroke="#666" stroke-width="1.100"><path d="M209.300 833.700h-5.700v9.800h5.700M209.300 833.700v11.500M207.800 844l1.500 1.500 1.500-1.500M209.300 833.700h6v2.300M209.300 843.500h6.300v-2.500"/><path d="M210.900 839.200l1.800 2 3.700-5" stroke-width="1.200" stroke="#555"/></g><text x="234.90" y="844.00" font-size="10.6" fill="#444" textLength="40.54" lengthAdjust="spacingAndGlyphs">русский</text><rect x="642.400" y="829.300" width="37.300" height="21" fill="#c6c6c6"/><g fill="none" stroke="#666" stroke-width="1.200"><path d="M622.500 834.500c-1.800-1-3.800-1.200-5.800-0.900v9.800c2-0.300 4-0.100 5.800 0.900c1.800-1 3.800-1.200 5.800-0.900v-9.800c-2-0.300-4-0.100-5.800 0.900zM622.500 834.500v11"/><path d="M618.300 835.800h3M618.300 837.500h3M618.300 839.200h3M618.300 840.900h3M623.800 835.800h3M623.800 837.500h3M623.800 839.200h3M623.800 840.900h3" stroke-width="1" stroke="#5a5a5a"/></g><rect x="654.900" y="833.700" width="12.600" height="11.400" fill="none" stroke="#666" stroke-width="1.300"/><path d="M657 836.200h8.500M657 838h8.500M657 839.800h8.500M657 841.600h8.500M657 843.300h8.500" stroke="#505050" stroke-width="1.050"/><g fill="none" stroke="#666" stroke-width="1.200"><path d="M698.500 843h-5.500v-9h10.200v4"/><path d="M694.800 836h6.400M694.800 838h5M694.800 840h3" stroke-width="1.050" stroke="#5a5a5a"/></g><circle cx="702.100" cy="841.900" r="3.900" fill="#666"/><path d="M700 840.200c1-0.600 2.200-0.300 2.800 0.400c-0.300 0.800-1.300 1-1.600 1.800c-0.800-0.300-1.400-1.200-1.200-2.200zM703 842.500c0.800-0.300 1.600 0 1.900 0.600c-0.300 0.800-1 1.400-1.800 1.600c-0.500-0.700-0.500-1.500-0.100-2.200z" fill="#e8e8e8"/><path d="M722.600 839.700h6.600" stroke="#606060" stroke-width="1.700"/><path d="M733 839.600h100.400" stroke="#9a9a9a" stroke-width="1"/><rect x="780.900" y="834.200" width="3.900" height="11" fill="#646464"/><path d="M836.900 839.700h8.300M841.050 835.550v8.300" stroke="#606060" stroke-width="1.800"/><text x="861.90" y="843.30" font-size="10.5" fill="#5a5a5a" textLength="25.76" lengthAdjust="spacingAndGlyphs">100%</text></svg></footer>
</body></html>
